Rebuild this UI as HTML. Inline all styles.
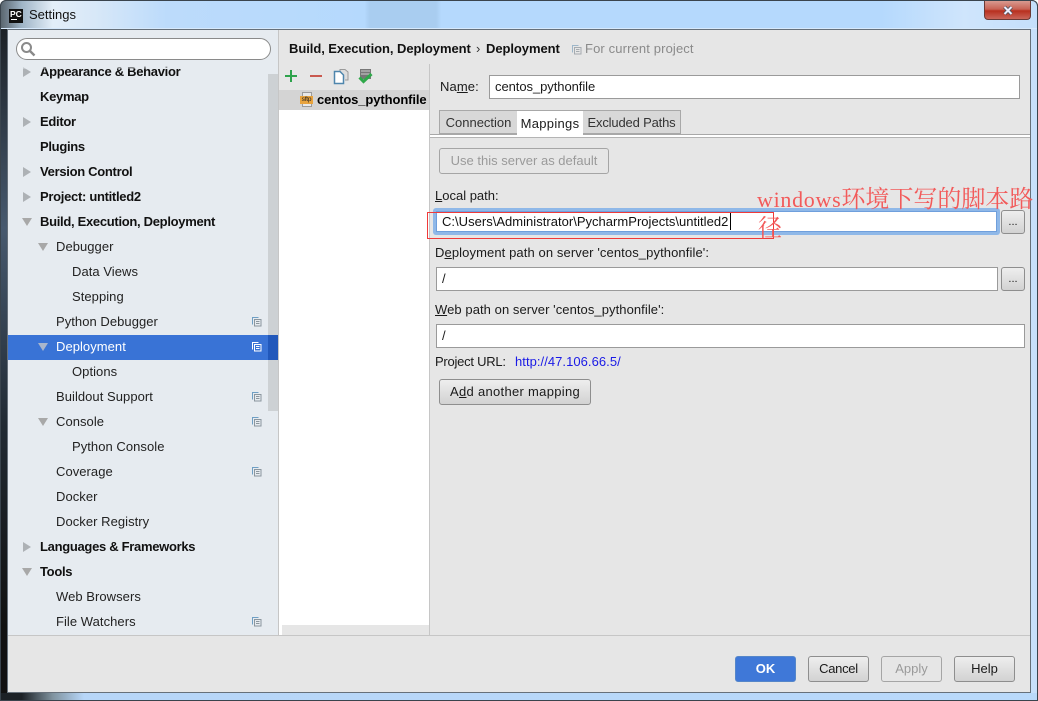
<!DOCTYPE html>
<html><head><meta charset="utf-8"><style>
*{box-sizing:border-box}
html,body{margin:0;padding:0;width:1038px;height:701px;overflow:hidden;background:#fff}
body{position:relative;font-family:"Liberation Sans","Noto Sans CJK SC",sans-serif;font-size:13px;color:#1a1a1a}
.a{position:absolute}
.t{position:absolute;white-space:nowrap;line-height:16px;letter-spacing:.05px}
.row{position:absolute;white-space:nowrap;line-height:16px;letter-spacing:.05px;color:#222}
.b{font-weight:bold;letter-spacing:-.3px;color:#111}
.tri-d{position:absolute;width:0;height:0;border-left:5px solid transparent;border-right:5px solid transparent;border-top:8px solid #a8a8a8}
.tri-r{position:absolute;width:0;height:0;border-top:5px solid transparent;border-bottom:5px solid transparent;border-left:8px solid #adb1b5}
.inp{position:absolute;background:#fff;border:1px solid #9a9a9a;line-height:22px;padding-left:5px;letter-spacing:-.06px}
.btn{position:absolute;border:1px solid #8e8e8e;border-radius:3px;background:linear-gradient(#eeeeee,#d2d2d2);text-align:center;letter-spacing:0}
u{text-underline-offset:1px}
</style></head><body>
<div class="a" style="left:0;top:0;width:1038px;height:701px;background:#b9d9fa;border:1px solid #3a444d;border-radius:6px 6px 0 0"></div>
<div class="a" style="left:0;top:0;width:1038px;height:29px;border-radius:6px 6px 0 0;background:linear-gradient(90deg,#5a6670 0,#9fb4c6 2%,#e3eef8 5%,#d8e8f8 9%,#bcdbfb 16%,#b5d9fd 35%,#b5d9fd 35.100%,#a9cdf0 35.600%,#a9cdf0 42%,#b5d9fd 42.500%,#b5d9fd 85%,#cfe5fc 93%,#c4dffb 100%);border:1px solid #3a444d;border-bottom:0"></div>
<div class="a" style="left:1px;top:28px;width:1036px;height:1px;background:#d6e9fc"></div>
<div class="a" style="left:1px;top:29px;width:6px;height:664px;background:linear-gradient(#1c2126,#47596e 30%,#212a33 60%,#111 90%)"></div>
<div class="a" style="left:1px;top:693px;width:1036px;height:7px;background:linear-gradient(90deg,#1c2126 0,#1c2126 2%,#80939f 5%,#b7d6f8 8%,#b9d9fa 100%)"></div>
<div class="a" style="left:1031px;top:29px;width:6px;height:664px;background:#c7e0fb"></div>
<div class="a" style="left:9px;top:9px;width:14px;height:14px;background:#111"></div>
<div class="a" style="left:10px;top:9px;color:#fff;font-size:8.500px;font-weight:bold;line-height:11px">PC</div>
<div class="a" style="left:11px;top:19px;width:6px;height:1px;background:#fff"></div>
<div class="t" style="left:29px;top:7px;letter-spacing:0;color:#111">Settings</div>
<div class="a" style="left:984px;top:1px;width:47px;height:19px;border:1px solid #6a3a36;border-top:0;border-radius:0 0 4px 4px;background:linear-gradient(#d99a90,#c96355 45%,#b8301f 55%,#c9665a)"></div>
<svg class="a" style="left:1002px;top:5px" width="12" height="11"><path d="M2.500 2L9.500 9M9.500 2L2.500 9" stroke="#4a4f55" stroke-width="3.600"/><path d="M2.500 2L9.500 9M9.500 2L2.500 9" stroke="#eef" stroke-width="2"/></svg>

<!-- content -->
<div class="a" style="left:7px;top:29px;width:1024px;height:664px;background:#e6e6e6;border:1px solid #66707a"></div>
<div class="a" style="left:8px;top:30px;width:270px;height:605px;background:#e6ebf0;overflow:hidden">
 <div class="a" style="left:260px;top:44px;width:10px;height:337px;background:#cdd1d4"></div>
 <div class="a" style="left:0;top:305px;width:270px;height:25px;background:#3973d6"></div>
 <div class="a" style="left:260px;top:305px;width:10px;height:25px;background:#2158bb"></div>
</div>
<div class="a" style="left:278px;top:30px;width:1px;height:605px;background:#c6c6c6"></div>
<div class="a" style="left:8px;top:635px;width:1022px;height:1px;background:#c6c6c6"></div>

<!-- search -->
<div class="a" style="left:16px;top:38px;width:255px;height:22px;background:#fff;border:1px solid #8a8a8a;border-radius:11px"></div>
<svg class="a" style="left:20px;top:41px" width="16" height="16"><circle cx="6.500" cy="6.500" r="4.500" fill="none" stroke="#8a8a8a" stroke-width="2"/><path d="M10 10L14.500 14.500" stroke="#8a8a8a" stroke-width="2.400"/></svg>

<!-- tree -->
<div class="a" style="left:8px;top:64px;width:260px;height:571px;overflow:hidden">
 <div class="tri-r" style="left:15px;top:3px"></div>
 <div class="row b" style="left:32px;top:0px">Appearance &amp; Behavior</div>
 <div class="row b" style="left:32px;top:25px">Keymap</div>
 <div class="tri-r" style="left:15px;top:53px"></div>
 <div class="row b" style="left:32px;top:50px">Editor</div>
 <div class="row b" style="left:32px;top:75px">Plugins</div>
 <div class="tri-r" style="left:15px;top:103px"></div>
 <div class="row b" style="left:32px;top:100px">Version Control</div>
 <div class="tri-r" style="left:15px;top:128px"></div>
 <div class="row b" style="left:32px;top:125px">Project: untitled2</div>
 <div class="tri-d" style="left:14px;top:154px"></div>
 <div class="row b" style="left:32px;top:150px">Build, Execution, Deployment</div>
 <div class="tri-d" style="left:30px;top:179px"></div>
 <div class="row" style="left:48px;top:175px">Debugger</div>
 <div class="row" style="left:64px;top:200px">Data Views</div>
 <div class="row" style="left:64px;top:225px">Stepping</div>
 <div class="row" style="left:48px;top:250px">Python Debugger</div>
 <div class="tri-d" style="left:30px;top:279px;border-top-color:#a9b6cc"></div>
 <div class="row" style="left:48px;top:275px;color:#fff">Deployment</div>
 <div class="row" style="left:64px;top:300px">Options</div>
 <div class="row" style="left:48px;top:325px">Buildout Support</div>
 <div class="tri-d" style="left:30px;top:354px"></div>
 <div class="row" style="left:48px;top:350px">Console</div>
 <div class="row" style="left:64px;top:375px">Python Console</div>
 <div class="row" style="left:48px;top:400px">Coverage</div>
 <div class="row" style="left:48px;top:425px">Docker</div>
 <div class="row" style="left:48px;top:450px">Docker Registry</div>
 <div class="tri-r" style="left:15px;top:478px"></div>
 <div class="row b" style="left:32px;top:475px">Languages &amp; Frameworks</div>
 <div class="tri-d" style="left:14px;top:504px"></div>
 <div class="row b" style="left:32px;top:500px">Tools</div>
 <div class="row" style="left:48px;top:525px">Web Browsers</div>
 <div class="row" style="left:48px;top:550px">File Watchers</div>
</div>
<div class="a" style="left:8px;top:64px;width:260px;height:5px;background:linear-gradient(#e6ebf0,rgba(230,235,240,.3))"></div>

<!-- copy icons -->
<svg class="a" style="left:0;top:0" width="280" height="640">
<defs><g id="c" fill="none"><path d="M.5 7.500V.5H6.500" stroke="#6f9fc4"/><rect x="2.500" y="2.500" width="6.500" height="6.500" stroke="#8b969e" fill="#e6ebf0"/><path d="M4 4.500H7.500M4 6.500H7.500" stroke="#8b969e"/></g></defs>
<use href="#c" x="252" y="317"/><use href="#c" x="252" y="392"/><use href="#c" x="252" y="417"/><use href="#c" x="252" y="467"/><use href="#c" x="252" y="617"/>
<g fill="none" transform="translate(252 342)"><path d="M.5 7.500V.5H6.500" stroke="#fff"/><rect x="2.500" y="2.500" width="6.500" height="6.500" stroke="#fff"/><path d="M4 4.500H7.500M4 6.500H7.500" stroke="#fff"/></g>
</svg>

<!-- header -->
<div class="t" style="left:289px;top:41px;font-weight:bold;letter-spacing:-.06px;color:#111">Build, Execution, Deployment</div>
<div class="t" style="left:476px;top:41px;color:#333;font-size:13px;letter-spacing:0">›</div>
<div class="t" style="left:486px;top:41px;font-weight:bold;letter-spacing:-.06px;color:#111">Deployment</div>
<svg class="a" style="left:572px;top:45px" width="10" height="10"><g fill="none"><path d="M.5 7.500V.5H6.500" stroke="#9db6c9"/><rect x="2.500" y="2.500" width="6.500" height="6.500" stroke="#a5abb0" fill="#e6e6e6"/><path d="M4 4.500H7.500M4 6.500H7.500" stroke="#a5abb0"/></g></svg>
<div class="t" style="left:585px;top:41px;color:#8a8a8a;letter-spacing:.13px">For current project</div>

<!-- toolbar -->
<svg class="a" style="left:280px;top:64px" width="100" height="26">
<path d="M5 12H17M11 6V18" stroke="#2ea34c" stroke-width="2"/>
<path d="M30 12H42" stroke="#c9594f" stroke-width="2"/>
<path d="M60 7V5.500H65L68 8V16H65" fill="#ddd" stroke="#9a9a9a"/>
<path d="M54.500 7.500H60L63.500 11V19.500H54.500Z" fill="#fff" stroke="#4f86ad" stroke-width="1.500"/>
<rect x="80" y="5" width="11" height="10" fill="#777"/><path d="M81 7H90M81 10H90" stroke="#ccc"/>
<path d="M79.500 13.500L83.500 17.500L91.500 10" fill="none" stroke="#2fa84a" stroke-width="3"/>
</svg>

<!-- list -->
<div class="a" style="left:279px;top:90px;width:150px;height:545px;background:#fff"></div>
<div class="a" style="left:279px;top:90px;width:150px;height:20px;background:#d4d4d4"></div>
<div class="a" style="left:282px;top:625px;width:147px;height:10px;background:#e6e6e6"></div>
<div class="a" style="left:429px;top:64px;width:1px;height:571px;background:#c6c6c6"></div>
<div class="a" style="left:302px;top:92px;width:10px;height:15px;background:#e8e8e8;border:1px solid #9a9a9a"></div>
<div class="a" style="left:300px;top:96px;width:13px;height:8px;background:#e8a33d;color:#222;font-size:6.500px;line-height:8px;letter-spacing:-.2px;text-align:center;overflow:hidden">sftp</div>
<div class="t" style="left:317px;top:92px;font-weight:bold;letter-spacing:-.1px;font-size:13px;color:#000">centos_pythonfile</div>

<!-- right -->
<div class="t" style="left:440px;top:79px;letter-spacing:.1px">Na<u>m</u>e:</div>
<div class="inp" style="left:489px;top:75px;width:531px;height:24px">centos_pythonfile</div>

<div class="a" style="left:439px;top:110px;width:78px;height:24px;background:#d8d8d8;border:1px solid #a8a8a8;border-right:0;text-align:center;line-height:24px;color:#333;letter-spacing:0">Connection</div>
<div class="a" style="left:517px;top:110px;width:66px;height:25px;background:#fff;border-top:1px solid #a8a8a8;text-align:center;line-height:25px;letter-spacing:.3px">Mappings</div>
<div class="a" style="left:583px;top:110px;width:98px;height:24px;background:#d8d8d8;border:1px solid #a8a8a8;border-left:0;text-align:center;line-height:24px;color:#333;letter-spacing:-.17px">Excluded Paths</div>
<div class="a" style="left:430px;top:134px;width:87px;height:1px;background:#a8a8a8"></div>
<div class="a" style="left:583px;top:134px;width:447px;height:1px;background:#a8a8a8"></div>
<div class="a" style="left:430px;top:135px;width:600px;height:2px;background:#fff"></div>
<div class="a" style="left:430px;top:137px;width:600px;height:1px;background:#b4b4b4"></div>

<div class="btn" style="left:439px;top:148px;width:170px;height:26px;line-height:24px;background:#e6e6e6;border-color:#a5a5a5;color:#9a9a9a;letter-spacing:0">Use this server as default</div>

<div class="t" style="left:435px;top:188px;letter-spacing:0"><u>L</u>ocal path:</div>
<div class="a" style="left:433px;top:208px;width:567px;height:27px;background:#8fb8e8;border-radius:3px"></div>
<div class="a" style="left:436px;top:211px;width:561px;height:21px;background:#fff;border:1px solid #6f9fdc"></div>
<div class="t" style="left:442px;top:214px;letter-spacing:.02px;color:#111">C:\Users\Administrator\PycharmProjects\untitled2</div>
<div class="a" style="left:730px;top:213px;width:1px;height:17px;background:#000"></div>
<div class="btn" style="left:1001px;top:210px;width:24px;height:24px;line-height:22px;font-size:11px">...</div>

<div class="t" style="left:435px;top:245px;letter-spacing:.1px">D<u>e</u>ployment path on server 'centos_pythonfile':</div>
<div class="inp" style="left:436px;top:267px;width:562px;height:24px">/</div>
<div class="btn" style="left:1001px;top:267px;width:24px;height:24px;line-height:22px;font-size:11px">...</div>

<div class="t" style="left:435px;top:302px;letter-spacing:.07px"><u>W</u>eb path on server 'centos_pythonfile':</div>
<div class="inp" style="left:436px;top:324px;width:589px;height:24px">/</div>

<div class="t" style="left:435px;top:354px;letter-spacing:-.25px">Project URL:</div>
<div class="t" style="left:515px;top:354px;color:#1a1ae6;letter-spacing:.05px">http://47.106.66.5/</div>
<div class="btn" style="left:439px;top:379px;width:152px;height:26px;line-height:24px;letter-spacing:.3px">A<u>d</u>d another mapping</div>

<!-- annotation -->
<div class="a" style="left:427px;top:212px;width:347px;height:27px;border:1px solid #f03a3a"></div>
<div class="a" style="left:757px;top:186px;width:281px;font-family:'Liberation Serif','Noto Serif CJK SC',serif;font-size:24px;line-height:28px;color:#f25a5a;white-space:nowrap"><span style="font-size:22px;letter-spacing:.7px">windows</span>环境下写的脚本路</div>
<div class="a" style="left:758px;top:215px;font-family:'Liberation Serif','Noto Serif CJK SC',serif;font-size:24px;line-height:28px;color:#f25a5a">径</div>

<!-- footer -->
<div class="btn" style="left:735px;top:656px;width:61px;height:26px;line-height:24px;background:#3f78d8;border-color:#5586c9;color:#fff;font-weight:bold">OK</div>
<div class="btn" style="left:808px;top:656px;width:61px;height:26px;line-height:24px;letter-spacing:-.3px">Cancel</div>
<div class="btn" style="left:881px;top:656px;width:61px;height:26px;line-height:24px;background:#e6e6e6;border-color:#a5a5a5;color:#9a9a9a">Apply</div>
<div class="btn" style="left:954px;top:656px;width:61px;height:26px;line-height:24px">Help</div>
</body></html>
